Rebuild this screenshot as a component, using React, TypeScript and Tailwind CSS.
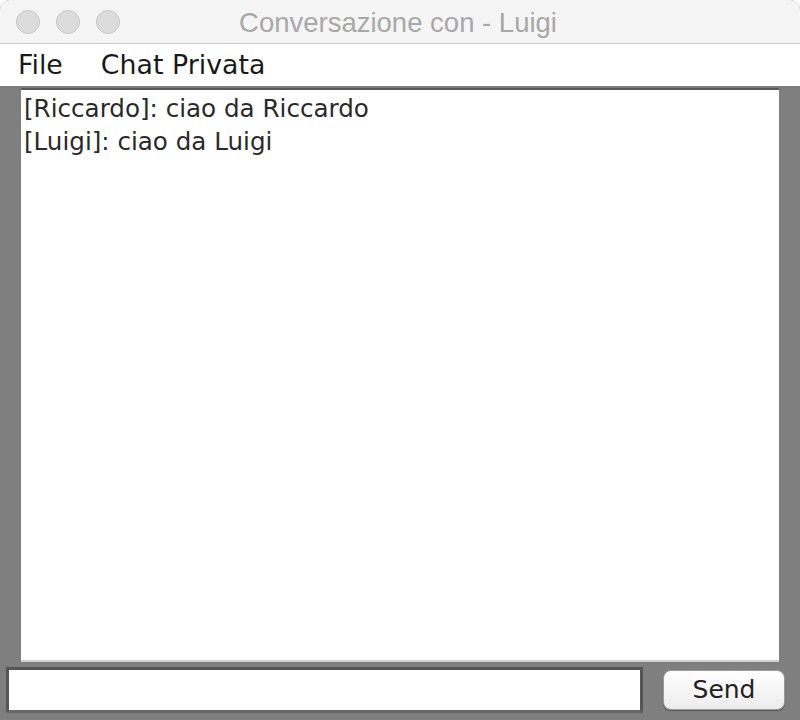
export default function App() {
  return (
    <div className="w-[800px] h-[720px] flex flex-col bg-[#7f7f7f] overflow-hidden rounded-t-[10px]" style={{ fontFamily: '"DejaVu Sans", sans-serif' }}>
      {/* title bar */}
      <div className="relative h-[44px] shrink-0 bg-[#f5f5f5] border-b border-[#c9c9c9] flex items-center justify-center">
        <div className="absolute left-[16px] top-[10px] flex gap-[16px]">
          <div className="w-[24px] h-[24px] rounded-full bg-[#dcdcdc] border border-[#c6c6c6]" />
          <div className="w-[24px] h-[24px] rounded-full bg-[#dcdcdc] border border-[#c6c6c6]" />
          <div className="w-[24px] h-[24px] rounded-full bg-[#dcdcdc] border border-[#c6c6c6]" />
        </div>
        <span className="text-[27.5px] text-[#a8a8a8] ml-[-4px] mt-[2px]" style={{ fontFamily: '"Liberation Sans", Arial, sans-serif' }}>
          Conversazione con - Luigi
        </span>
      </div>

      {/* menu bar */}
      <div className="h-[42px] shrink-0 bg-white flex items-center gap-[38px] pl-[18px] text-[26.8px] text-[#1a1a1a]">
        <span>File</span>
        <span>Chat Privata</span>
      </div>

      {/* chat area */}
      <div className="flex-1 flex flex-col pt-[2px]">
        <div className="mx-[21px] h-[574px] bg-white border-t-2 border-[#5a5a5a] border-b-2 border-b-[#d0d0d0] px-[3px] pt-[2px] text-[24.6px] leading-[33px] text-[#2a2a2a]">
          <div>[Riccardo]: ciao da Riccardo</div>
          <div>[Luigi]: ciao da Luigi</div>
        </div>

        <div className="flex items-center mt-[5px] pl-[6px] pr-[14px] gap-[20px]">
          <div className="w-[637px] h-[46px] bg-white border-[3px] border-[#555] border-b-[#666]" />
          <button className="w-[122px] h-[40px] rounded-[8px] bg-gradient-to-b from-white to-[#ececec] border border-[#9a9a9a] text-[25px] text-[#222] shadow-[0_1px_1px_rgba(0,0,0,0.3)]">
            Send
          </button>
        </div>
      </div>
    </div>
  );
}
